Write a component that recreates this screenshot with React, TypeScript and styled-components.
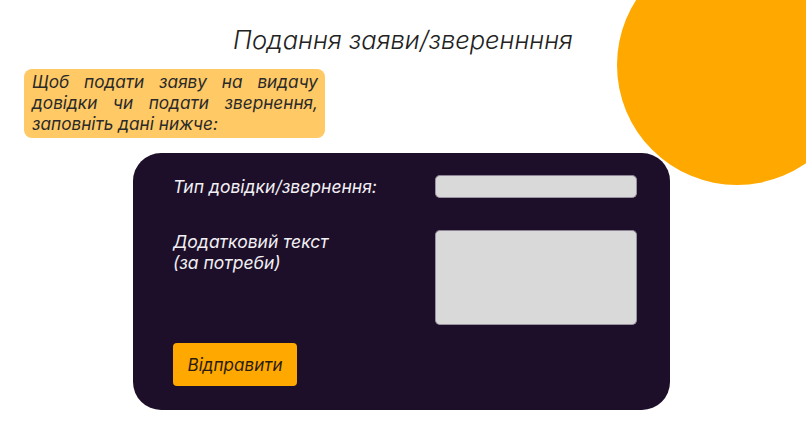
import React from 'react'
import styled, { createGlobalStyle } from 'styled-components'

const GlobalStyle = createGlobalStyle`
  html, body {
    margin: 0;
    padding: 0;
    background: #ffffff;
  }
  body {
    font-family: 'Inter', 'Noto Sans', sans-serif;
  }
`

const Page = styled.div`
  position: relative;
  width: 806px;
  height: 434px;
  overflow: hidden;
  background: #ffffff;
  display: flex;
  flex-direction: column;
`

const Sun = styled.div`
  position: absolute;
  left: 617px;
  top: -55px;
  width: 240px;
  height: 240px;
  border-radius: 50%;
  background: #ffa800;
`

const Title = styled.h1`
  position: relative;
  margin: 24px 0 0 0;
  text-align: center;
  font-family: 'Inter', sans-serif;
  font-style: italic;
  font-weight: 300;
  font-size: 25.5px;
  line-height: 32px;
  color: #222222;
`

const Hint = styled.p`
  position: relative;
  margin: 13px 0 0 24px;
  width: 301px;
  box-sizing: border-box;
  padding: 2px 7px 4px 8px;
  background: #ffc966;
  border-radius: 8px;
  font-style: italic;
  font-size: 17.2px;
  line-height: 21px;
  text-align: justify;
  color: #2a2a2a;
`

const Card = styled.form`
  position: relative;
  margin: 15px 0 0 133px;
  width: 537px;
  height: 257px;
  box-sizing: border-box;
  padding: 22px 33px 24px 40px;
  background: #1d0f29;
  border-radius: 28px;
  display: grid;
  grid-template-columns: 262px 202px;
  grid-template-rows: 23px 95px 1fr;
  row-gap: 32px;
`

const Label = styled.label<{ $top?: number }>`
  align-self: ${p => (p.$top ? 'start' : 'center')};
  margin-top: ${p => p.$top ?? 0}px;
  font-style: italic;
  font-size: 17.5px;
  line-height: 21px;
  color: #f2f0f4;
`

const Field = styled.div<{ $tall?: boolean }>`
  height: ${p => (p.$tall ? 95 : 23)}px;
  box-sizing: border-box;
  background: #d9d9d9;
  border: 1px solid #9a92a0;
  border-top-color: #8c8494;
  border-radius: 5px;
`

const Submit = styled.button`
  grid-column: 1;
  align-self: end;
  margin-top: -15px;
  width: 124px;
  height: 43px;
  border: none;
  border-radius: 4px;
  background: #ffa800;
  font-family: 'Inter', sans-serif;
  font-style: italic;
  font-size: 17px;
  color: #2a1c10;
  padding: 0;
`

function App(): JSX.Element {
  return (
    <Page>
      <GlobalStyle />
      <Sun />
      <Title>Подання заяви/звереннння</Title>
      <Hint>
        Щоб подати заяву на видачу довідки чи подати звернення, заповніть дані нижче:
      </Hint>
      <Card onSubmit={e => e.preventDefault()}>
        <Label>Тип довідки/звернення:</Label>
        <Field />
        <Label $top={1}>
          Додатковий текст
          <br />
          (за потреби)
        </Label>
        <Field $tall />
        <Submit type="submit">Відправити</Submit>
      </Card>
    </Page>
  )
}

export default App
